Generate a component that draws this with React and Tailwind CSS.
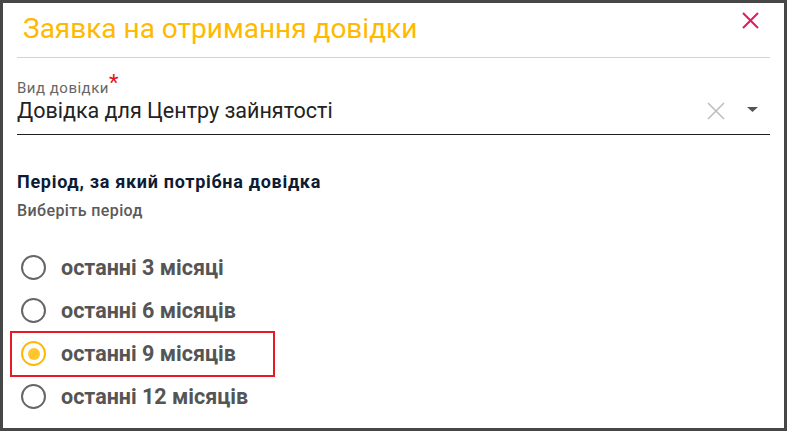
import React from 'react';

const options = ['останні 3 місяці', 'останні 6 місяців', 'останні 9 місяців', 'останні 12 місяців'];

export default function App() {
  const selected = 2;

  return (
    <div className="w-[787px] h-[431px] border-[3px] border-[#474747] bg-white px-[14px] font-['Roboto',sans-serif] overflow-hidden">
      {/* header */}
      <div className="flex items-start justify-between h-[55px] border-b border-[#d4d4d4]">
        <h1 className="pl-[6px] pt-[9px] text-[28px] leading-[34px] text-[#ffb900] font-normal">
          Заявка на отримання довідки
        </h1>
        <button className="mt-[9px] mr-[11px] w-[17px] h-[17px]">
          <svg viewBox="0 0 17 17" className="w-[17px] h-[17px]">
            <path d="M1 1L16 16M16 1L1 16" stroke="#e8195a" strokeWidth="2" fill="none" />
          </svg>
        </button>
      </div>

      {/* select field */}
      <div className="mt-[22px] border-b border-[#1f1f1f]">
        <div className="flex h-[16px] text-[15px] leading-[16px] tracking-[0.5px] text-[#666]">
          Вид довідки
          <span className="relative -top-[5px] h-[16px] text-[22px] leading-[16px] text-[#e4161b]">*</span>
        </div>
        <div className="flex items-center justify-between mt-[3px] pb-[11px]">
          <span className="text-[21.5px] leading-[24px] text-[#222]">Довідка для Центру зайнятості</span>
          <div className="flex items-center gap-[22px] mr-[12px]">
            <svg viewBox="0 0 18 18" className="w-[18px] h-[18px]">
              <path d="M1 1L17 17M17 1L1 17" stroke="#bdbdbd" strokeWidth="1.6" fill="none" />
            </svg>
            <svg viewBox="0 0 11 5" className="w-[11px] h-[5px] -mt-[3px]">
              <path d="M0 0H11L5.5 5Z" fill="#555" />
            </svg>
          </div>
        </div>
      </div>

      {/* period */}
      <div className="mt-[37px]">
        <div className="text-[18px] leading-[20px] tracking-[0.7px] font-bold text-[#0d1b33]">
          Період, за який потрібна довідка
        </div>
        <div className="mt-[10px] text-[16px] leading-[18px] tracking-[0.4px] font-medium text-[#5a5a5a]">
          Виберіть період
        </div>
      </div>

      <div className="mt-[26px] flex flex-col">
        {options.map((label, i) => (
          <div key={label} className="relative flex items-center h-[43px]">
            {i === selected && (
              <span className="absolute left-[-7px] top-[-1px] w-[265px] h-[46px] border-2 border-[#e41b23]" />
            )}
            {i === selected ? (
              <span className="ml-[4px] w-[25px] h-[25px] rounded-full border-[2.5px] border-[#ffb900] flex items-center justify-center">
                <span className="w-[12px] h-[12px] rounded-full bg-[#ffc62e]" />
              </span>
            ) : (
              <span className="ml-[4px] w-[25px] h-[25px] rounded-full border-2 border-[#666]" />
            )}
            <span className="ml-[15px] text-[21.5px] leading-[24px] font-bold text-[#555]">{label}</span>
          </div>
        ))}
      </div>
    </div>
  );
}
